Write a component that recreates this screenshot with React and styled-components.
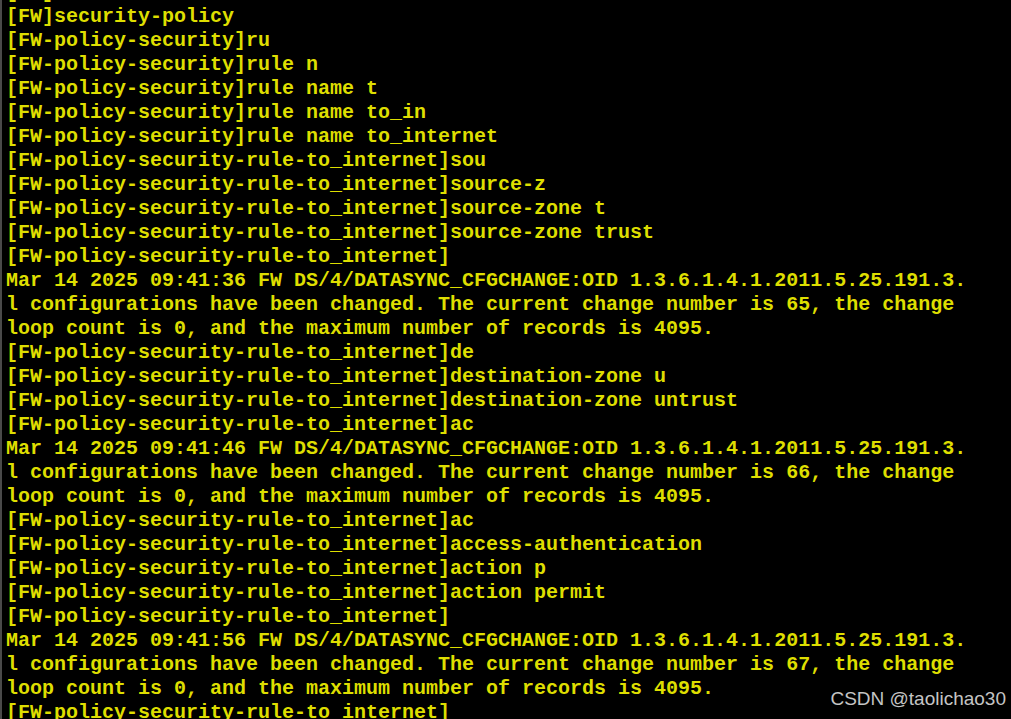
import React from 'react';
import styled, { createGlobalStyle } from 'styled-components';

const GlobalStyle = createGlobalStyle`
  html, body {
    margin: 0;
    padding: 0;
    background: #000;
    overflow: hidden;
  }
`;

const Screen = styled.div`
  position: relative;
  width: 1011px;
  height: 719px;
  background: #000;
  overflow: hidden;
  border-left: 2px solid #4a4a4a;
  box-sizing: border-box;
`;

const Console = styled.pre`
  margin: -19px 0 0 0;
  padding: 0 0 0 4px;
  font-family: "Liberation Mono", "Courier New", monospace;
  font-weight: bold;
  font-size: 20px;
  line-height: 24px;
  color: #dede00;
  white-space: pre;
`;

const Line = styled.div`
  height: 24px;
`;

const Watermark = styled.div`
  position: absolute;
  right: 5px;
  bottom: 9px;
  font-family: "Liberation Sans", Arial, sans-serif;
  font-size: 19px;
  line-height: 22px;
  color: #c4c4c4;
`;

const P = '[FW-policy-security-rule-to_internet]';

const lines = [
  '[FW]',
  '[FW]security-policy',
  '[FW-policy-security]ru',
  '[FW-policy-security]rule n',
  '[FW-policy-security]rule name t',
  '[FW-policy-security]rule name to_in',
  '[FW-policy-security]rule name to_internet',
  P + 'sou',
  P + 'source-z',
  P + 'source-zone t',
  P + 'source-zone trust',
  P,
  'Mar 14 2025 09:41:36 FW DS/4/DATASYNC_CFGCHANGE:OID 1.3.6.1.4.1.2011.5.25.191.3.',
  'l configurations have been changed. The current change number is 65, the change',
  'loop count is 0, and the maximum number of records is 4095.',
  P + 'de',
  P + 'destination-zone u',
  P + 'destination-zone untrust',
  P + 'ac',
  'Mar 14 2025 09:41:46 FW DS/4/DATASYNC_CFGCHANGE:OID 1.3.6.1.4.1.2011.5.25.191.3.',
  'l configurations have been changed. The current change number is 66, the change',
  'loop count is 0, and the maximum number of records is 4095.',
  P + 'ac',
  P + 'access-authentication',
  P + 'action p',
  P + 'action permit',
  P,
  'Mar 14 2025 09:41:56 FW DS/4/DATASYNC_CFGCHANGE:OID 1.3.6.1.4.1.2011.5.25.191.3.',
  'l configurations have been changed. The current change number is 67, the change',
  'loop count is 0, and the maximum number of records is 4095.',
  P,
];

export default function App() {
  return (
    <>
      <GlobalStyle />
      <Screen>
        <Console>
          {lines.map((l, i) => (
            <Line key={i}>{l}</Line>
          ))}
        </Console>
        <Watermark>CSDN @taolichao30</Watermark>
      </Screen>
    </>
  );
}
